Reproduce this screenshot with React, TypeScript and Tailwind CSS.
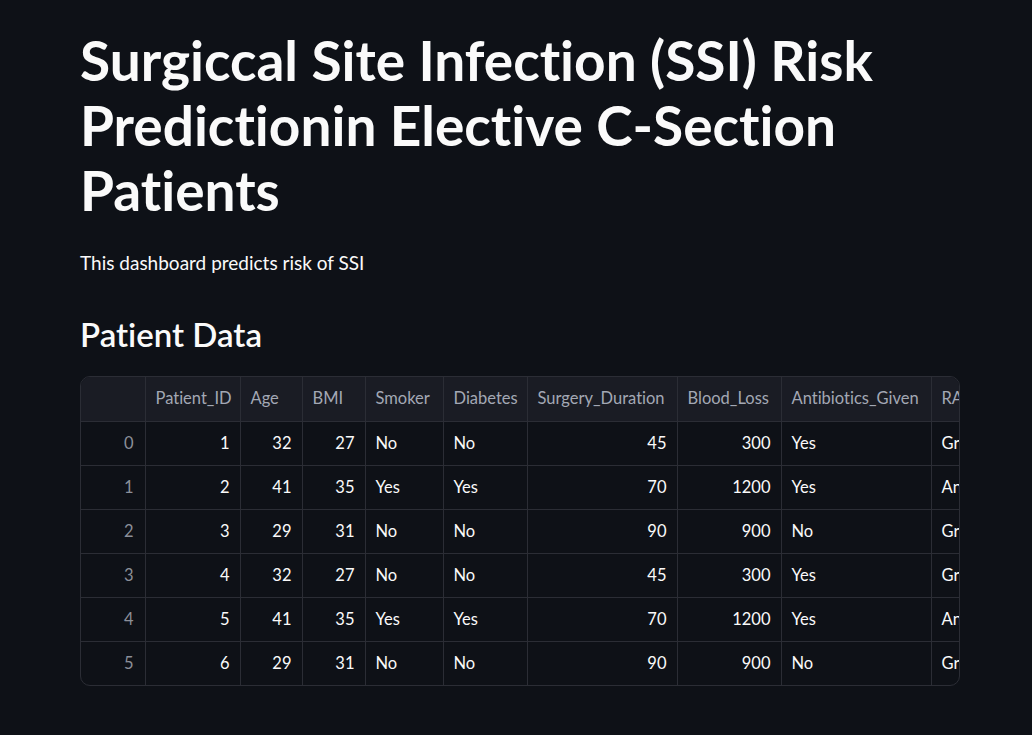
import React from "react";

const cols = [
  { name: "Patient_ID", w: 95, num: true },
  { name: "Age", w: 62, num: true },
  { name: "BMI", w: 63, num: true },
  { name: "Smoker", w: 78, num: false },
  { name: "Diabetes", w: 84, num: false },
  { name: "Surgery_Duration", w: 150, num: true },
  { name: "Blood_Loss", w: 104, num: true },
  { name: "Antibiotics_Given", w: 150, num: false },
  { name: "RA_Category", w: 130, num: false },
];

const rows: (string | number)[][] = [
  [1, 32, 27, "No", "No", 45, 300, "Yes", "Gram+"],
  [2, 41, 35, "Yes", "Yes", 70, 1200, "Yes", "Anaerobic"],
  [3, 29, 31, "No", "No", 90, 900, "No", "Gram+"],
  [4, 32, 27, "No", "No", 45, 300, "Yes", "Gram+"],
  [5, 41, 35, "Yes", "Yes", 70, 1200, "Yes", "Anaerobic"],
  [6, 29, 31, "No", "No", 90, 900, "No", "Gram+"],
];

export default function App() {
  return (
    <div
      className="min-h-[735px] w-full bg-[#0e1117] text-[#fafafa] [font-variant-ligatures:none]"
      style={{ fontFamily: "Lato, 'Open Sans', sans-serif" }}
    >
      <div className="ml-[80px] w-[880px] pt-[28px]">
        <h1 className="text-[55px] font-bold leading-[65px] text-[#fafafa]">
          Surgiccal Site Infection (SSI) Risk Predictionin Elective C-Section Patients
        </h1>
        <p className="mt-[25px] text-[19px] leading-[30px]">This dashboard predicts risk of SSI</p>
        <h2 className="mt-[36px] text-[33px] font-semibold leading-[40px]">Patient Data</h2>
        <div className="mt-[22px] w-[880px] overflow-hidden rounded-[10px] border border-[#2b2d35]">
          <table
            className="table-fixed border-collapse text-[16.5px]"
            style={{ width: 64 + cols.reduce((a, c) => a + c.w, 0) }}
          >
            <colgroup>
              <col style={{ width: 64 }} />
              {cols.map((c) => (
                <col key={c.name} style={{ width: c.w }} />
              ))}
            </colgroup>
            <thead>
              <tr className="h-[44px] bg-[#1a1c24]">
                <th className="border-b border-r border-[#2b2d35]"></th>
                {cols.map((c) => (
                  <th
                    key={c.name}
                    className="whitespace-nowrap border-b border-r border-[#2b2d35] px-[10px] text-left font-normal text-[#a3a8b4]"
                  >
                    {c.name}
                  </th>
                ))}
              </tr>
            </thead>
            <tbody>
              {rows.map((r, i) => (
                <tr key={i} className="h-[44px]">
                  <td className="border-r border-t border-[#2b2d35] px-[11px] text-right text-[#8b8f99]">{i}</td>
                  {r.map((v, j) => (
                    <td
                      key={j}
                      className={`whitespace-nowrap border-r border-t border-[#2b2d35] px-[10px] ${
                        cols[j].num ? "text-right" : "text-left"
                      }`}
                    >
                      {v}
                    </td>
                  ))}
                </tr>
              ))}
            </tbody>
          </table>
        </div>
      </div>
    </div>
  );
}
